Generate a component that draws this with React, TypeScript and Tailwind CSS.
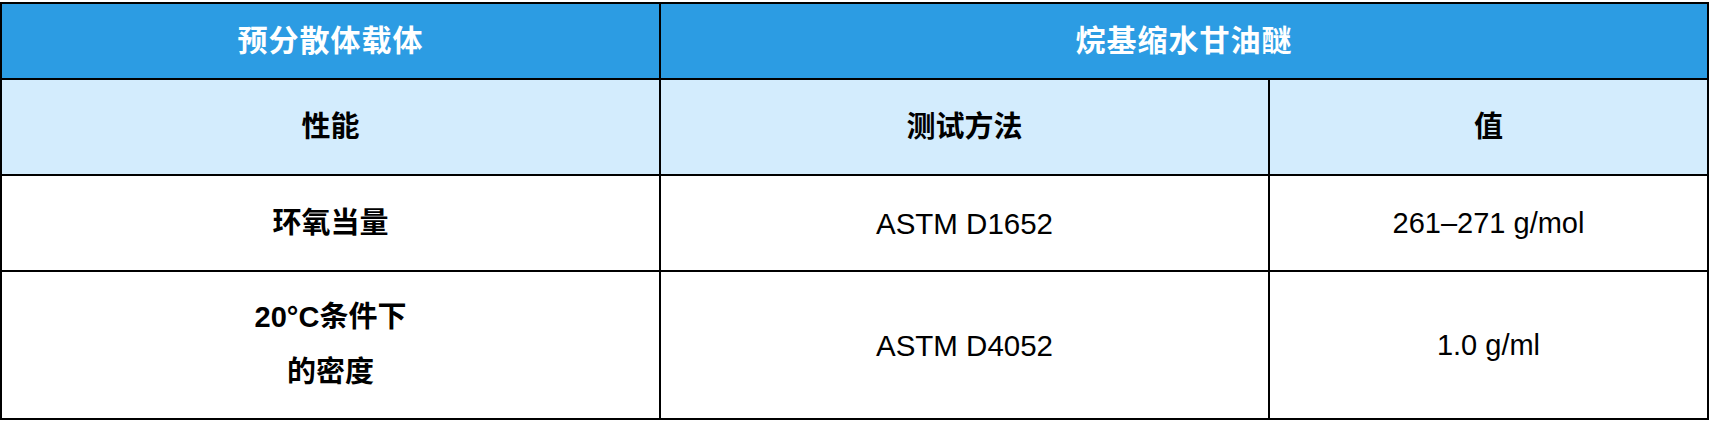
import React from 'react';

const rows = [
  { name: ['环氧当量'], method: 'ASTM D1652', value: '261–271 g/mol', h: 'h-[96px]' },
  { name: ['20°C条件下', '的密度'], method: 'ASTM D4052', value: '1.0 g/ml', h: 'h-[148px]' },
];

const App: React.FC = () => {
  return (
    <div className="w-[1710px] h-[422px] bg-white pt-[2px] font-['Liberation_Sans','Noto_Sans_CJK_SC',sans-serif] text-black">
      <table className="w-[1709px] table-fixed border-collapse border-2 border-black">
        <colgroup>
          <col className="w-[659px]" />
          <col className="w-[609px]" />
          <col />
        </colgroup>
        <thead>
          <tr className="h-[76px] bg-[#2c9ce3] text-white">
            <th className="border-2 border-black text-[30px] font-bold tracking-[1px] leading-none">预分散体载体</th>
            <th colSpan={2} className="border-2 border-black text-[30px] font-bold tracking-[1px] leading-none">烷基缩水甘油醚</th>
          </tr>
          <tr className="h-[96px] bg-[#d3ecfd]">
            <th className="border-2 border-black text-[29px] font-bold leading-none">性能</th>
            <th className="border-2 border-black text-[29px] font-bold leading-none">测试方法</th>
            <th className="border-2 border-black text-[29px] font-bold leading-none">值</th>
          </tr>
        </thead>
        <tbody>
          {rows.map((r) => (
            <tr key={r.method} className={r.h}>
              <td className="border-2 border-black text-center text-[29px] font-bold leading-[55px]">
                {r.name.map((line) => (
                  <div key={line}>{line}</div>
                ))}
              </td>
              <td className="border-2 border-black text-center text-[29.5px] leading-[55px]">{r.method}</td>
              <td className="border-2 border-black text-center text-[29px] leading-[55px]">{r.value}</td>
            </tr>
          ))}
        </tbody>
      </table>
    </div>
  );
};

export default App;
